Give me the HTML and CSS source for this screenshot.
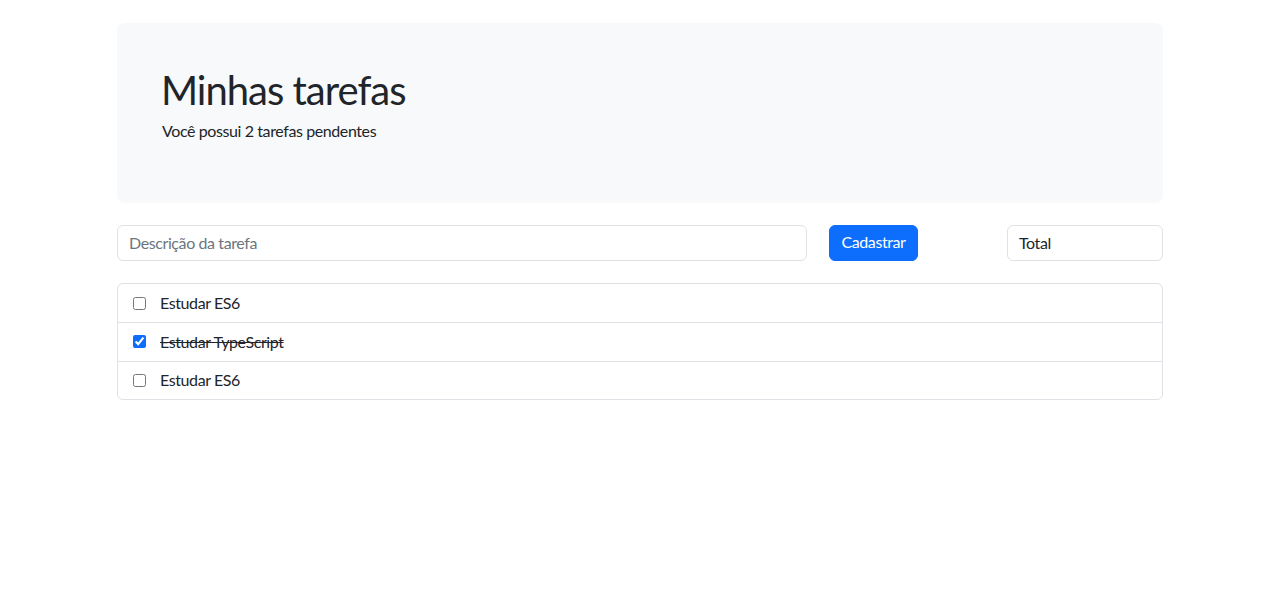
FILE: index.html
```html
<!DOCTYPE html>
<html lang="pt-BR">
<head>
<meta charset="utf-8">
<title>Minhas tarefas</title>
<link rel="stylesheet" href="styles.css">
</head>
<body>
<div class="container">
  <header class="jumbotron">
    <h1 class="title">Minhas tarefas</h1>
    <p class="subtitle">Você possui 2 tarefas pendentes</p>
  </header>
  <form class="form-row">
    <input class="field" type="text" placeholder="Descrição da tarefa">
    <div class="btn-cell"><button class="btn" type="button">Cadastrar</button></div>
    <input class="field field-total" type="text" value="Total">
  </form>
  <ul class="list">
    <li class="item"><input type="checkbox" class="check"><span class="label">Estudar ES6</span></li>
    <li class="item"><input type="checkbox" class="check" checked><span class="label done">Estudar TypeScript</span></li>
    <li class="item"><input type="checkbox" class="check"><span class="label">Estudar ES6</span></li>
  </ul>
</div>
</body>
</html>
```
FILE: styles.css
```css
* { box-sizing: border-box; }
html, body { margin: 0; padding: 0; background: #fff; }
body {
  font-family: "Lato", "Noto Sans", sans-serif;
  color: #212529;
  font-size: 16px;
  line-height: 1.5;
  letter-spacing: -0.4px;
}
.container {
  width: 1046px;
  margin: 0 auto;
  padding-top: 23px;
}
.jumbotron {
  background: #f8f9fa;
  border-radius: 8px;
  height: 180px;
  padding: 43px 44px 0;
  margin-bottom: 22px;
}
.title {
  margin: 0 0 5px;
  font-size: 40px;
  font-weight: 400;
  line-height: 1.2;
  letter-spacing: -1px;
}
.subtitle { margin: 0 0 0 1px; font-size: 16px; }
.form-row {
  display: grid;
  grid-template-columns: 690px 156px 156px;
  column-gap: 22px;
  margin: 0 0 22px;
}
.field {
  height: 36px;
  border: 1px solid #dee2e6;
  border-radius: 6px;
  padding: 0 11px 2px;
  font: inherit;
  font-size: 16px;
  letter-spacing: -0.4px;
  color: #212529;
  background: #fff;
}
.field::placeholder { color: #6c757d; }
.btn {
  height: 36px;
  width: 89px;
  background: #0d6efd;
  color: #fff;
  border: 1px solid #0d6efd;
  border-radius: 6px;
  padding: 0 0 2px;
  font: inherit;
  font-size: 16px;
  letter-spacing: -0.4px;
}
.list {
  list-style: none;
  margin: 0;
  padding: 0;
  border: 1px solid #dee2e6;
  border-radius: 6px;
}
.item {
  display: flex;
  align-items: center;
  height: 38.5px;
  padding: 0 15px;
  border-top: 1px solid #dee2e6;
}
.item:first-child { border-top: 0; height: 38px; }
.check {
  width: 13px;
  height: 13px;
  margin: 0 14px 0 0;
  accent-color: #0d6efd;
}
.label { font-size: 16px; }
.done { text-decoration: line-through; }
```
